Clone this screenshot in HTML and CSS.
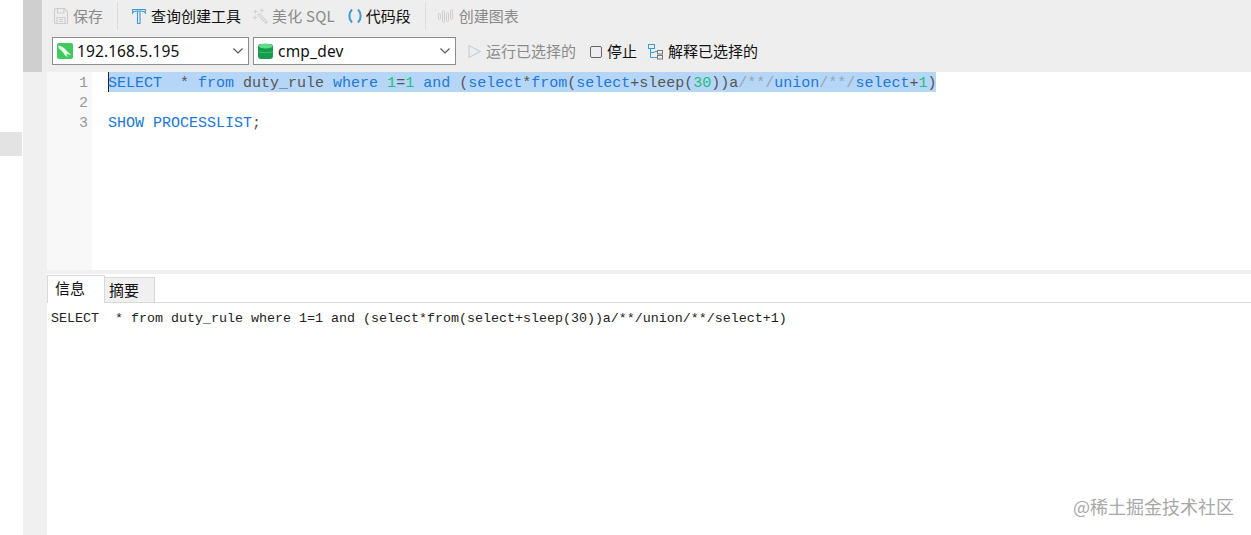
FILE: index.html
```html
<!DOCTYPE html>
<html lang="zh">
<head>
<meta charset="utf-8">
<title>SQL</title>
<link rel="stylesheet" href="styles.css">
</head>
<body>
<aside class="nav"><div class="nav-mark"></div></aside>
<div class="rail"><div class="rail-top"></div></div>
<main class="main">
  <header class="toolbar">
    <div class="row row-top">
      <span class="tool off ico-save">
        <svg width="16" height="18" viewBox="0 0 16 18" fill="none" stroke="#cdcdcd" stroke-width="1.100"><path d="M2.500 1.500h9l3 3v11a1 1 0 0 1-1 1h-11a1 1 0 0 1-1-1v-13a1 1 0 0 1 1-1z"/><path d="M4.500 1.500v4.500h6.500v-4.500M4 16.500v-6h8v6M6 12.500h4M6 14.500h4"/></svg>
        <span>保存</span>
      </span>
      <span class="sep"></span>
      <span class="tool ico-build">
        <svg width="14" height="18" viewBox="0 0 14 18" fill="none" stroke="#3f9ad8" stroke-width="1.100"><path d="M.6 2.500h12.800v3.300c-1-1.300-2.300-1.800-4-1.800h-4.800c-1.700 0-3 .5-4 1.800z"/><path d="M5.500 4v12.500h2.500v-12.500"/></svg>
        <span>查询创建工具</span>
      </span>
      <span class="tool off ico-beauty">
        <svg width="16" height="18" viewBox="0 0 16 18" fill="none" stroke="#d2d2d2" stroke-width="1.100"><path d="M6 8l1.500-1.500 8 8.500-1.500 1.500zM3.500 2.500v4M1.500 4.500h4M10 1.500v4M8 3.500h4M1 10.500h4M3 8.500v4"/></svg>
        <span>美化 SQL</span>
      </span>
      <span class="tool ico-snip">
        <svg width="16" height="16" viewBox="0 0 16 16" fill="none" stroke="#3f9ad8" stroke-width="2"><path d="M5 1.500c-3.500 3.500-3.500 9.500 0 13M11 1.500c3.500 3.500 3.500 9.500 0 13"/></svg>
        <span>代码段</span>
      </span>
      <span class="sep sep-b"></span>
      <span class="tool off ico-chart">
        <svg width="16" height="16" viewBox="0 0 16 16" fill="none" stroke="#c8c8c8" stroke-width=".9"><rect x=".5" y="5.500" width="2" height="6" rx="1"/><rect x="4.500" y="2.500" width="2" height="12" rx="1"/><rect x="8.500" y="4.500" width="2" height="9" rx="1"/><rect x="12.500" y="1.500" width="2" height="10" rx="1"/></svg>
        <span>创建图表</span>
      </span>
    </div>
    <div class="row row-bottom">
      <div class="select select-host">
        <svg class="logo" width="16" height="16" viewBox="0 0 16 16"><rect width="16" height="16" rx="2" fill="#3fc95f"/><path d="M1 2.500c3 .5 6 2 8 4.500 1.500 2 3 3 5 4.500-2 .5-3.500 0-4.500-1 0 1.500.5 2.500 1.500 3.500-2-.5-3.500-2-4.500-4-1.500-2-3-3.500-4.500-4.500-.5-1-.5-2-1-3z" fill="#eafbea"/></svg>
        <span class="select-text">192.168.5.195</span>
        <svg class="caret" width="10" height="6" viewBox="0 0 10 6" fill="none" stroke="#555" stroke-width="1.100"><path d="M.5.500l4.500 4.500 4.500-4.500"/></svg>
      </div>
      <div class="select select-db">
        <svg class="logo" width="15" height="16" viewBox="0 0 15 16"><rect y="1" width="15" height="15" rx="3" fill="#169c4c"/><ellipse cx="7.500" cy="3" rx="7" ry="2.500" fill="#5fdc86"/><path d="M0 8.500c2 1.500 13 1.500 15 0" stroke="#3cc06c" fill="none"/></svg>
        <span class="select-text">cmp_dev</span>
        <svg class="caret" width="10" height="6" viewBox="0 0 10 6" fill="none" stroke="#555" stroke-width="1.100"><path d="M.5.500l4.500 4.500 4.500-4.500"/></svg>
      </div>
      <span class="action off act-run">
        <svg width="13" height="15" viewBox="0 0 13 15" fill="none" stroke="#c4d3e2" stroke-width="1.200"><path d="M1 1.500l11 6-11 6z"/></svg>
        <span class="label">运行已选择的</span>
      </span>
      <span class="action act-stop">
        <span class="stop-box"></span>
        <span class="label">停止</span>
      </span>
      <span class="action act-explain">
        <svg width="16" height="17" viewBox="0 0 16 17" fill="none" stroke-width="1"><rect x=".5" y="1.500" width="6" height="4" stroke="#3f9ad8"/><path d="M2.500 5.500v9h4M2.500 9.500h4" stroke="#3f9ad8"/><rect x="9.500" y="7.500" width="5" height="3.500" stroke="#777"/><rect x="9.500" y="12.500" width="5" height="3.500" stroke="#777"/><path d="M6.500 8.500h3M6.500 14.500h3" stroke="#3f9ad8"/></svg>
        <span class="label">解释已选择的</span>
      </span>
    </div>
  </header>
  <section class="editor">
    <div class="gutter">
      <div class="ln">1</div>
      <div class="ln">2</div>
      <div class="ln">3</div>
    </div>
    <div class="code">
      <div class="line selected"><span class="k">SELECT</span>  * <span class="k">from</span> duty_rule <span class="k">where</span> <span class="n">1</span>=<span class="n">1</span> <span class="k">and</span> (<span class="k">select</span>*<span class="k">from</span>(<span class="k">select</span>+sleep(<span class="n">30</span>))a<span class="c">/**/</span><span class="k">union</span><span class="c">/**/</span><span class="k">select</span>+<span class="n">1</span>)</div>
      <div class="line"></div>
      <div class="line"><span class="k">SHOW</span> <span class="k">PROCESSLIST</span>;</div>
    </div>
  </section>
  <section class="result">
    <div class="tabs">
      <span class="tab active">信息</span>
      <span class="tab">摘要</span>
    </div>
    <div class="output">SELECT  * from duty_rule where 1=1 and (select*from(select+sleep(30))a/**/union/**/select+1)</div>
    <div class="watermark">@稀土掘金技术社区</div>
  </section>
</main>
</body>
</html>
```
FILE: styles.css
```css
* { box-sizing: border-box; }
html, body { height: 100%; }
body {
  margin: 0;
  display: flex;
  height: 535px;
  overflow: hidden;
  background: #fff;
  font-family: "Noto Sans CJK SC", "Liberation Sans", sans-serif;
  color: #111;
}
.nav { width: 23px; padding-top: 132px; flex: none; }
.nav-mark { width: 22px; height: 24px; background: #e3e3e3; }
.rail { width: 19px; flex: none; background: #f0f0f0; }
.rail-top { height: 72px; background: #cfcfcf; }
.main { flex: 1; min-width: 0; display: flex; flex-direction: column; background: #f0f0f0; }
.toolbar { height: 72px; background: #eeeeee; padding-left: 10px; flex: none; }
.row { display: flex; align-items: center; }
.row-top { height: 30px; margin-bottom: 7px; padding-left: 1px; }
.row-bottom { height: 28px; }
.tool { display: inline-flex; align-items: center; font-size: 15px; white-space: nowrap; }
.tool svg { flex: none; margin-top: 1px; }
.off { color: #8a8a8a; }
.ico-save { gap: 4px; }
.ico-build { gap: 5px; margin-left: 14px; }
.ico-beauty { gap: 4px; margin-left: 11px; letter-spacing: .2px; }
.ico-snip { gap: 3px; margin-left: 12px; }
.ico-chart { gap: 5px; margin-left: 12px; }
.sep { width: 1px; height: 28px; background: #dcdcdc; margin-left: 14px; margin-top: 2px; }
.sep-b { margin-left: 14px; }
.select {
  height: 28px;
  background: #fff;
  border: 1px solid #8c8c8c;
  display: flex;
  align-items: center;
  padding-left: 4px;
  padding-right: 5px;
  font: 15.500px "Noto Sans", "Liberation Sans", sans-serif;
  color: #111;
}
.select-host { width: 197px; }
.select-db { width: 203px; margin-left: 4px; }
.select-text { flex: 1; margin-left: 4px; margin-top: -1px; letter-spacing: .1px; }
.select-db .select-text { margin-left: 5px; letter-spacing: .2px; }
.logo, .caret { flex: none; }
.action { display: inline-flex; align-items: center; font-size: 15px; white-space: nowrap; }
.label { margin-top: -1px; }
.act-run { gap: 5px; margin-left: 12px; }
.act-stop { gap: 5px; margin-left: 14px; }
.act-explain { gap: 4px; margin-left: 11px; }
.stop-box { width: 12px; height: 12px; border: 1px solid #666; border-radius: 2px; margin-top: 1px; }
.editor {
  height: 198px;
  flex: none;
  display: flex;
  margin-left: 5px;
  background: #fff;
  font: 15px/24px "Liberation Mono", monospace;
}
.gutter { width: 45px; background: #f8f8f8; flex: none; color: #999; }
.ln { height: 20px; text-align: right; padding-right: 4px; }
.code { padding-left: 16px; flex: 1; min-width: 0; color: #555; }
.line { height: 20px; white-space: pre; width: max-content; }
.selected { background: #b6d6f8; box-shadow: inset 1px 0 0 #222; }
.k { color: #2078d6; }
.n { color: #1cc07a; }
.c { color: #9aa4ad; }
.result { flex: 1; position: relative; margin-left: 5px; background: #fff; border-top: 4px solid #f0f0f0; min-height: 0; }
.tabs { display: flex; align-items: flex-end; height: 29px; border-bottom: 1px solid #d9d9d9; }
.tab {
  height: 25px;
  width: 50px;
  font-size: 15px;
  line-height: 24px;
  padding-left: 4px;
  background: #f0f0f0;
  border: 1px solid #d9d9d9;
  border-bottom: 0;
  border-left: 0;
}
.tab.active {
  width: 58px;
  height: 28px;
  margin-bottom: -1px;
  padding-left: 7px;
  line-height: 23px;
  background: #fff;
  border-left: 1px solid #d9d9d9;
}
.output { font: 13.333px/20px "Liberation Mono", monospace; color: #222; padding: 6px 0 0 4px; white-space: pre; }
.watermark {
  position: absolute;
  right: 17px;
  bottom: 18px;
  font-size: 18px;
  line-height: 22px;
  color: #a8a8a8;
}
```
